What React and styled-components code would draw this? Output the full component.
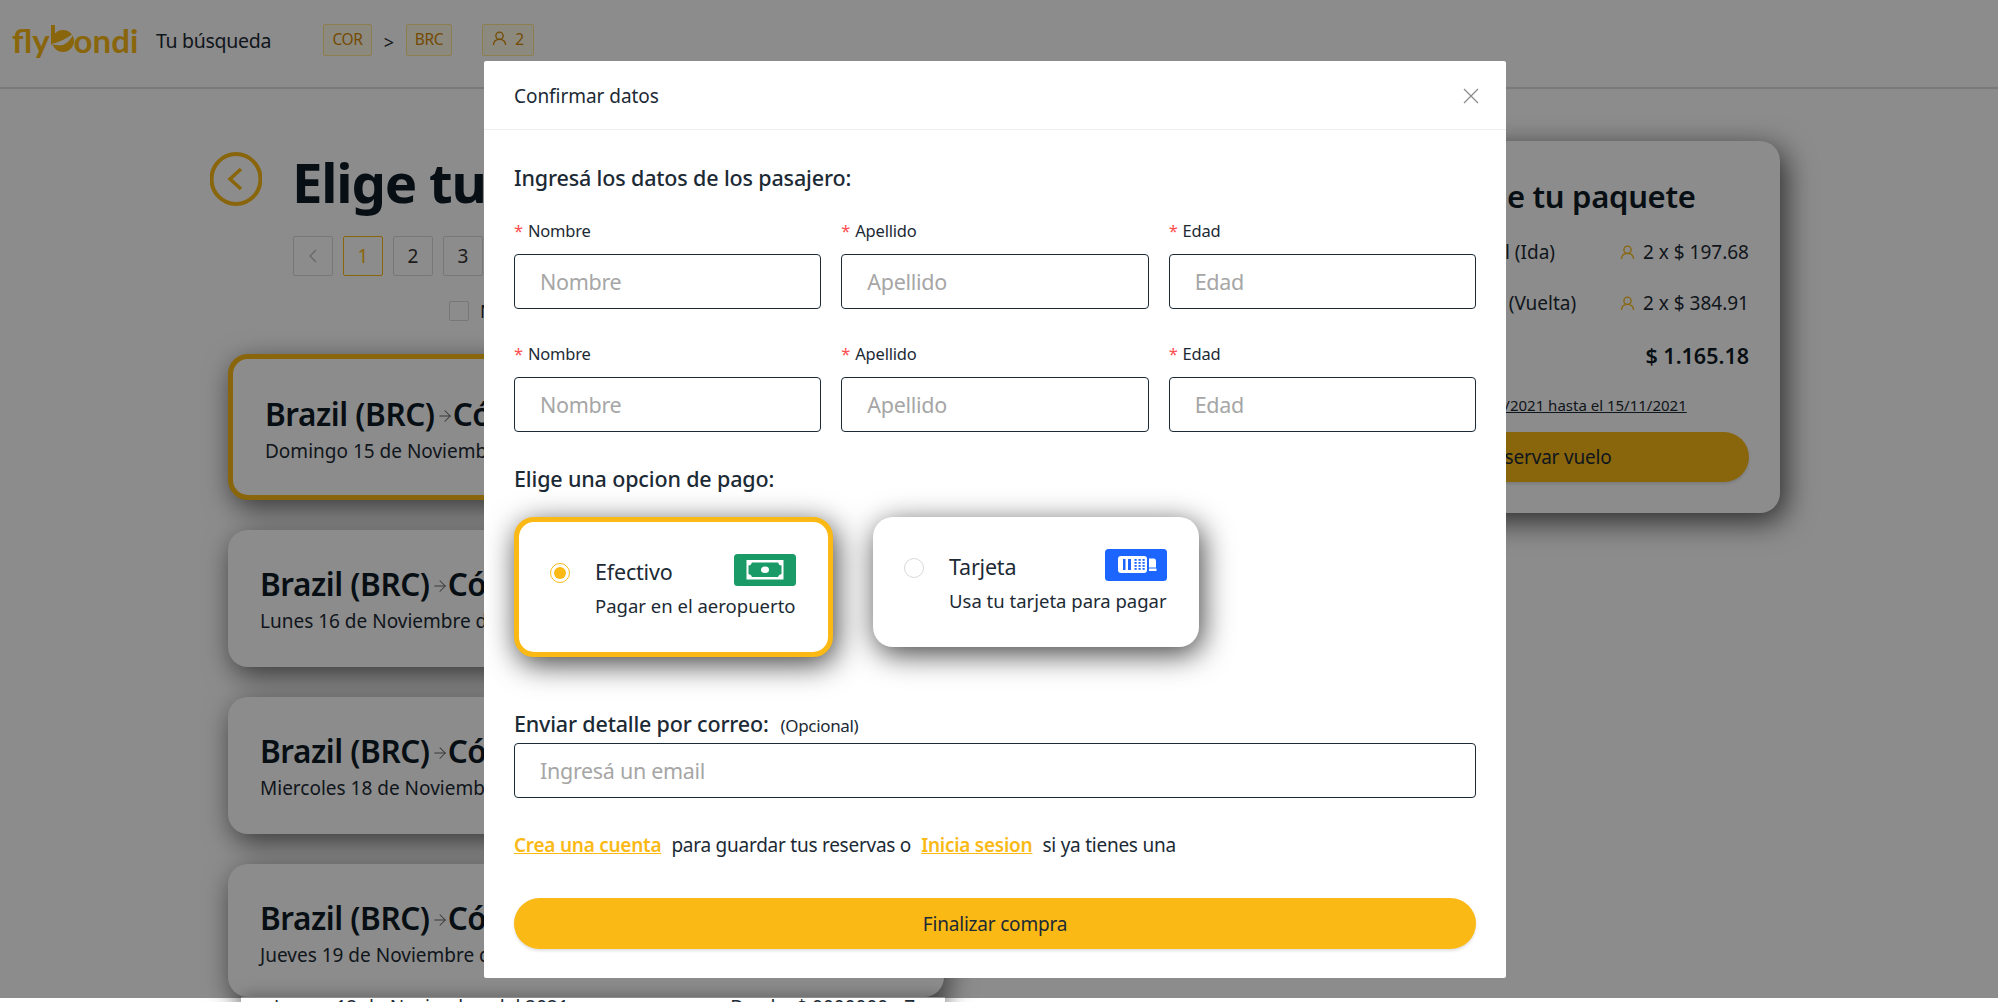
import React from "react";
import styled, { createGlobalStyle } from "styled-components";
import { ArrowRight } from "lucide-react";

const GOLD = "#fab915";
const INK = "#1c2a35";

const GlobalStyle = createGlobalStyle`
  html, body {
    margin: 0;
    height: 1002px;
    overflow: hidden;
    background: #fff;
    font-family: "Noto Sans", "Open Sans", sans-serif;
    color: ${INK};
  }
  * { box-sizing: border-box; }
`;

const Page = styled.div`
  position: relative;
  width: 1998px;
  height: 1002px;
  overflow: hidden;
`;

/* top bar */
const Header = styled.header`
  height: 89px;
  border-bottom: 2px solid #dcdcdc;
  display: flex;
  align-items: flex-start;
  padding: 24px 0 0 12px;
`;

const Logo = styled.div`
  display: flex;
  align-items: baseline;
  width: 144px;
  height: 34px;
  font-family: "Lato", sans-serif;
  font-size: 33px;
  line-height: 32px;
  font-weight: 700;
  color: ${GOLD};
  svg {
    flex: none;
    margin: 0 0 -1px 1px;
  }
`;

const Search = styled.span`
  font-size: 19.5px;
  line-height: 34px;
  letter-spacing: -0.3px;
  width: 167px;
`;

const Tag = styled.span`
  display: inline-flex;
  align-items: center;
  justify-content: center;
  gap: 8px;
  height: 32px;
  width: ${(p) => p.$w}px;
  margin-right: ${(p) => p.$mr || 0}px;
  padding-bottom: 3px;
  background: #fffbe6;
  border: 1px solid #ffe58f;
  border-radius: 2px;
  color: #d48806;
  font-size: 15.5px;
  letter-spacing: -0.4px;
`;

const Chevron = styled.span`
  width: 34px;
  text-align: center;
  font-size: 18px;
  line-height: 36px;
`;

/* page content */
const Main = styled.main`
  display: flex;
  justify-content: space-between;
  padding: 52px 218px 0 228px;
`;

const Left = styled.section`
  width: 716px;
  padding-top: 12px;
`;

const TitleRow = styled.div`
  display: flex;
  align-items: flex-start;
  margin-left: -18px;
  gap: 30px;
  height: 60px;
`;

const BackCircle = styled.svg`
  width: 52px;
  height: 54px;
  margin-top: -1px;
`;

const Title = styled.h1`
  margin: -1px 0 0;
  font-size: 54.5px;
  line-height: 60px;
  font-weight: 700;
  letter-spacing: -1.2px;
  color: #0d1a26;
  white-space: nowrap;
`;

const Pagination = styled.nav`
  display: flex;
  gap: 10px;
  margin: 23px 0 0 65px;
`;

const PageBtn = styled.span`
  width: 40px;
  height: 40px;
  display: flex;
  align-items: center;
  justify-content: center;
  border: 1px solid ${(p) => (p.$active ? GOLD : "#d9d9d9")};
  border-radius: 2px;
  color: ${(p) => (p.$active ? GOLD : "#333")};
  font-size: 19px;
`;

const Check = styled.label`
  display: flex;
  align-items: center;
  gap: 11px;
  margin: 25px 0 0 221px;
  height: 20px;
  font-size: 18px;
  white-space: nowrap;
`;

const CheckBox = styled.span`
  width: 20px;
  height: 20px;
  border: 1px solid #d9d9d9;
  border-radius: 2px;
  background: #fff;
`;

const Flights = styled.div`
  display: flex;
  flex-direction: column;
  gap: 30px;
  margin-top: 33px;
`;

const FlightCard = styled.article`
  height: ${(p) => p.$h}px;
  background: #fff;
  border-radius: 20px;
  border: ${(p) => (p.$active ? `5px solid ${GOLD}` : "none")};
  padding: ${(p) => (p.$active ? "33px 0 0 32px" : "32px 0 0 32px")};
  box-shadow: 4px 8px 28px rgba(0, 0, 0, 0.6);
`;

const Route = styled.div`
  display: flex;
  align-items: center;
  font-size: 31.5px;
  line-height: 44px;
  font-weight: 600;
  letter-spacing: -0.45px;
  color: #0d1a26;
  svg {
    color: #666;
    margin: 4px -1px 0 1px;
  }
`;

const RouteDate = styled.div`
  font-size: 19px;
  line-height: 26px;
  margin-top: 2px;
`;

const NextCard = styled.div`
  height: 30px;
  margin: -30px 0 0 13px;
  width: 704px;
  background: #fff;
  box-shadow: 0 0 18px rgba(0, 0, 0, 0.35);
  display: flex;
  justify-content: space-between;
  padding: 0 30px 0 33px;
  font-size: 19px;
  line-height: 20px;
`;

/* summary on the right */
const Summary = styled.aside`
  width: 462px;
  height: 372px;
  background: #fff;
  border-radius: 20px;
  padding: 36px 31px 0;
  box-shadow: 5px 8px 30px rgba(0, 0, 0, 0.7);
`;

const SummaryTitle = styled.h2`
  margin: -1px 0 23px 11px;
  font-size: 31px;
  line-height: 40px;
  font-weight: 600;
  white-space: nowrap;
  letter-spacing: -0.3px;
  color: #0d1a26;
`;

const LegRow = styled.div`
  display: flex;
  align-items: center;
  height: 26px;
  margin-bottom: 25px;
  font-size: 19px;
`;

const LegName = styled.span`
  width: 206px;
  text-align: right;
  white-space: nowrap;
  margin-right: auto;
`;

const LegPrice = styled.span`
  display: flex;
  align-items: center;
  gap: 8px;
  color: ${INK};
  svg { color: ${GOLD}; }
`;

const TotalRow = styled.div`
  display: flex;
  justify-content: space-between;
  font-size: 21.5px;
  line-height: 30px;
  font-weight: 600;
  color: #0d1a26;
`;

const Dates = styled.div`
  margin-top: 24px;
  padding-left: 26px;
  font-size: 15px;
  line-height: 20px;
  text-align: center;
  text-decoration: underline;
  white-space: nowrap;
`;

const PillButton = styled.button`
  display: block;
  width: 100%;
  height: ${(p) => p.$h}px;
  margin-top: ${(p) => p.$mt}px;
  border: none;
  border-radius: 26px;
  background: ${GOLD};
  color: ${INK};
  font-family: inherit;
  font-size: 19px;
  letter-spacing: -0.2px;
  box-shadow: 0 2px 3px rgba(0, 0, 0, 0.12);
`;

const ReserveButton = styled(PillButton)`
  padding-right: 10px;
`;

/* modal */
const Overlay = styled.div`
  position: absolute;
  top: 0;
  left: 0;
  right: 0;
  height: 998px;
  background: rgba(0, 0, 0, 0.45);
  padding-top: 61px;
`;

const Modal = styled.div`
  width: 1022px;
  height: 917px;
  margin: 0 0 0 484px;
  background: #fff;
  border-radius: 2px;
`;

const ModalHead = styled.div`
  height: 69px;
  border-bottom: 1px solid #eee;
  padding: 2px 27px 0 30px;
  display: flex;
  align-items: center;
  justify-content: space-between;
  font-size: 19px;
  letter-spacing: -0.05px;
`;

const ModalBody = styled.div`
  padding: 34px 30px 0;
`;

const Heading = styled.h3`
  margin: ${(p) => p.$mt || 0}px 0 0;
  font-size: 21.5px;
  line-height: 28px;
  font-weight: 500;
  letter-spacing: -0.15px;
`;

const FieldRow = styled.div`
  display: grid;
  grid-template-columns: repeat(3, 1fr);
  gap: 20px;
  margin-top: ${(p) => p.$mt}px;
`;

const Label = styled.label`
  display: block;
  font-size: 16.5px;
  line-height: 22px;
  letter-spacing: -0.2px;
  margin-bottom: 12px;
  &::before {
    content: "*";
    color: #ff4d4f;
    margin-right: 5px;
  }
`;

const Input = styled.input`
  display: block;
  width: 100%;
  height: 55px;
  padding: 0 25px;
  border: 1px solid ${INK};
  border-radius: 4px;
  outline: none;
  font-family: inherit;
  font-size: 21.5px;
  background: #fff;
  &::placeholder {
    color: #a6a6a6;
    letter-spacing: -0.3px;
    opacity: 1;
  }
`;

const Options = styled.div`
  display: flex;
  align-items: flex-start;
  gap: 40px;
  margin-top: 24px;
`;

const Option = styled.div`
  width: ${(p) => p.$w}px;
  height: ${(p) => (p.$active ? 140 : 130)}px;
  border-radius: 20px;
  background: #fff;
  border: ${(p) => (p.$active ? `5px solid ${GOLD}` : "none")};
  padding: 32px 32px 32px 31px;
  display: flex;
  gap: 25px;
  box-shadow: 3px 7px 30px rgba(0, 0, 0, 0.75);
`;

const Radio = styled.span`
  flex: none;
  width: 20px;
  height: 20px;
  margin-top: 9px;
  border-radius: 50%;
  border: 1px solid ${(p) => (p.$on ? GOLD : "#d9d9d9")};
  display: flex;
  align-items: center;
  justify-content: center;
  &::after {
    content: "";
    width: 12px;
    height: 12px;
    border-radius: 50%;
    background: ${(p) => (p.$on ? GOLD : "transparent")};
  }
`;

const OptionText = styled.div`
  flex: 1;
  min-width: 0;
`;

const OptionTop = styled.div`
  display: flex;
  justify-content: space-between;
  align-items: flex-start;
  height: 32px;
  margin-bottom: 8px;
  font-size: 21.5px;
  line-height: 36px;
  letter-spacing: -0.2px;
`;

const OptionSub = styled.div`
  font-size: 18.5px;
  line-height: 24px;
  white-space: nowrap;
`;

const PayIcon = styled.svg`
  width: 62px;
  height: 32px;
  flex: none;
`;

const MailHeading = styled.div`
  display: flex;
  align-items: baseline;
  gap: 12px;
  margin: 54px 0 4px;
  font-size: 21.5px;
  line-height: 26px;
  font-weight: 500;
  letter-spacing: -0.18px;
  small {
    font-size: 17px;
    font-weight: 400;
    letter-spacing: -0.35px;
  }
`;

const AccountLine = styled.p`
  display: flex;
  gap: 10px;
  margin: 36px 0 0;
  font-size: 19px;
  line-height: 22px;
  letter-spacing: -0.25px;
  white-space: nowrap;
`;

const GoldLink = styled.a`
  color: ${GOLD};
  font-weight: 600;
  text-decoration: underline;
`;

const UserIcon = ({ size = 15 }) => (
  <svg width={size} height={size} viewBox="0 0 16 16" fill="none" stroke="currentColor" strokeWidth="1.4">
    <circle cx="8" cy="5" r="3.9" />
    <path d="M1.5 15c.3-3.7 3-6 6.5-6s6.2 2.3 6.5 6" />
  </svg>
);

const flights = [
  { date: "Domingo 15 de Noviembre del 2021", h: 146, active: true },
  { date: "Lunes 16 de Noviembre del 2021", h: 137 },
  { date: "Miercoles 18 de Noviembre del 2021", h: 137 },
  { date: "Jueves 19 de Noviembre del 2021", h: 133 },
];

const App = () => (
  <Page>
    <GlobalStyle />
    <Header>
      <Logo>
        fly
        <svg width="23" height="28" viewBox="0 0 23 28">
          <rect x="0" y="0" width="4" height="20" fill={GOLD} />
          <circle cx="12" cy="16" r="11" fill={GOLD} />
          <path d="M-1 19 Q10 18 23 8 Q19 17 12 20 Q6 21 -1 19 Z" fill="#fff" />
        </svg>
        ondi
      </Logo>
      <Search>Tu búsqueda</Search>
      <Tag $w={49}>COR</Tag>
      <Chevron>&gt;</Chevron>
      <Tag $w={46} $mr={30}>BRC</Tag>
      <Tag $w={52}>
        <UserIcon />2
      </Tag>
    </Header>

    <Main>
      <Left>
        <TitleRow>
          <BackCircle viewBox="0 0 52 54" fill="none" stroke={GOLD} strokeWidth="4">
            <ellipse cx="26" cy="27" rx="24.5" ry="25" />
            <path d="M31 17 L20 27 L31 37" strokeWidth="3.5" />
          </BackCircle>
          <Title>Elige tu vuelo de ida</Title>
        </TitleRow>
        <Pagination>
          <PageBtn>
            <svg width="14" height="14" viewBox="0 0 14 14" fill="none" stroke="#bbb" strokeWidth="1.3">
              <path d="M10 1 L4 7 L10 13" />
            </svg>
          </PageBtn>
          <PageBtn $active>1</PageBtn>
          <PageBtn>2</PageBtn>
          <PageBtn>3</PageBtn>
          <PageBtn>4</PageBtn>
        </Pagination>
        <Check>
          <CheckBox />
          No tengo fechas
        </Check>
        <Flights>
          {flights.map((f) => (
            <FlightCard key={f.date} $active={f.active} $h={f.h}>
              <Route>
                Brazil (BRC)
                <ArrowRight size={18} strokeWidth={1.4} />
                Córdoba (COR)
              </Route>
              <RouteDate>{f.date}</RouteDate>
            </FlightCard>
          ))}
          <NextCard>
            <span>Jueves 12 de Noviembre del 2021</span>
            <span>Desde: $ 0000000 - 7</span>
          </NextCard>
        </Flights>
      </Left>

      <Summary>
        <SummaryTitle>Detalles de tu paquete</SummaryTitle>
        <LegRow>
          <LegName>Córdoba → Brasil (Ida)</LegName>
          <LegPrice>
            <UserIcon />2 x $ 197.68
          </LegPrice>
        </LegRow>
        <LegRow>
          <LegName>Brasil → Córdoba (Vuelta)</LegName>
          <LegPrice>
            <UserIcon />2 x $ 384.91
          </LegPrice>
        </LegRow>
        <TotalRow>
          <span>Total</span>
          <span>$ 1.165.18</span>
        </TotalRow>
        <Dates>Del 11/11/2021 hasta el 15/11/2021</Dates>
        <ReserveButton $h={50} $mt={17}>Reservar vuelo</ReserveButton>
      </Summary>
    </Main>

    <Overlay>
      <Modal>
        <ModalHead>
          Confirmar datos
          <svg width="16" height="16" viewBox="0 0 16 16" stroke="#8c8c8c" strokeWidth="1.3">
            <path d="M1 1 L15 15 M15 1 L1 15" />
          </svg>
        </ModalHead>
        <ModalBody>
          <Heading>Ingresá los datos de los pasajero:</Heading>
          <FieldRow $mt={28}>
            <div><Label>Nombre</Label><Input placeholder="Nombre" /></div>
            <div><Label>Apellido</Label><Input placeholder="Apellido" /></div>
            <div><Label>Edad</Label><Input placeholder="Edad" /></div>
          </FieldRow>
          <FieldRow $mt={34}>
            <div><Label>Nombre</Label><Input placeholder="Nombre" /></div>
            <div><Label>Apellido</Label><Input placeholder="Apellido" /></div>
            <div><Label>Edad</Label><Input placeholder="Edad" /></div>
          </FieldRow>
          <Heading $mt={33}>Elige una opcion de pago:</Heading>
          <Options>
            <Option $active $w={319}>
              <Radio $on />
              <OptionText>
                <OptionTop>
                  Efectivo
                  <PayIcon viewBox="0 0 62 32">
                    <rect width="62" height="32" rx="3.5" fill="#1a9a67" />
                    <rect x="12.5" y="6" width="37" height="19.500" fill="#fff" />
                    <path d="M18 8.500 H44 Q44.500 11 47.500 11.500 V20 Q44.500 20.500 44 23 H18 Q17.500 20.500 14.500 20 V11.500 Q17.500 11 18 8.500 Z" fill="#1a9a67" />
                    <ellipse cx="31" cy="15.800" rx="4" ry="3.200" fill="#fff" />
                  </PayIcon>
                </OptionTop>
                <OptionSub>Pagar en el aeropuerto</OptionSub>
              </OptionText>
            </Option>
            <Option $w={326}>
              <Radio />
              <OptionText>
                <OptionTop>
                  Tarjeta
                  <PayIcon viewBox="0 0 62 32">
                    <rect width="62" height="32" rx="3.500" fill="#1c66ff" />
                    <rect x="13" y="7" width="29" height="17" rx="3" fill="#fff" />
                    <rect x="18" y="10" width="2.500" height="11" fill="#1c66ff" />
                    <rect x="23" y="10" width="3" height="11" fill="#1c66ff" />
                    {[0, 1, 2, 3].map((r) =>
                      [0, 1, 2].map((c) => (
                        <rect key={`${r}-${c}`} x={29.5 + c * 4} y={10 + r * 3} width="2.200" height="1.800" fill="#1c66ff" />
                      ))
                    )}
                    <path d="M44 9.500 H49 Q51 9.500 51 12 V18.500 H44 Z" fill="#fff" />
                    <rect x="44" y="19.500" width="7.500" height="2.500" fill="#fff" />
                  </PayIcon>
                </OptionTop>
                <OptionSub>Usa tu tarjeta para pagar</OptionSub>
              </OptionText>
            </Option>
          </Options>
          <MailHeading>
            Enviar detalle por correo: <small>(Opcional)</small>
          </MailHeading>
          <Input placeholder="Ingresá un email" />
          <AccountLine>
            <GoldLink>Crea una cuenta</GoldLink>
            <span>para guardar tus reservas o</span>
            <GoldLink>Inicia sesion</GoldLink>
            <span>si ya tienes una</span>
          </AccountLine>
          <PillButton $h={51} $mt={42}>Finalizar compra</PillButton>
        </ModalBody>
      </Modal>
    </Overlay>
  </Page>
);

export default App;
